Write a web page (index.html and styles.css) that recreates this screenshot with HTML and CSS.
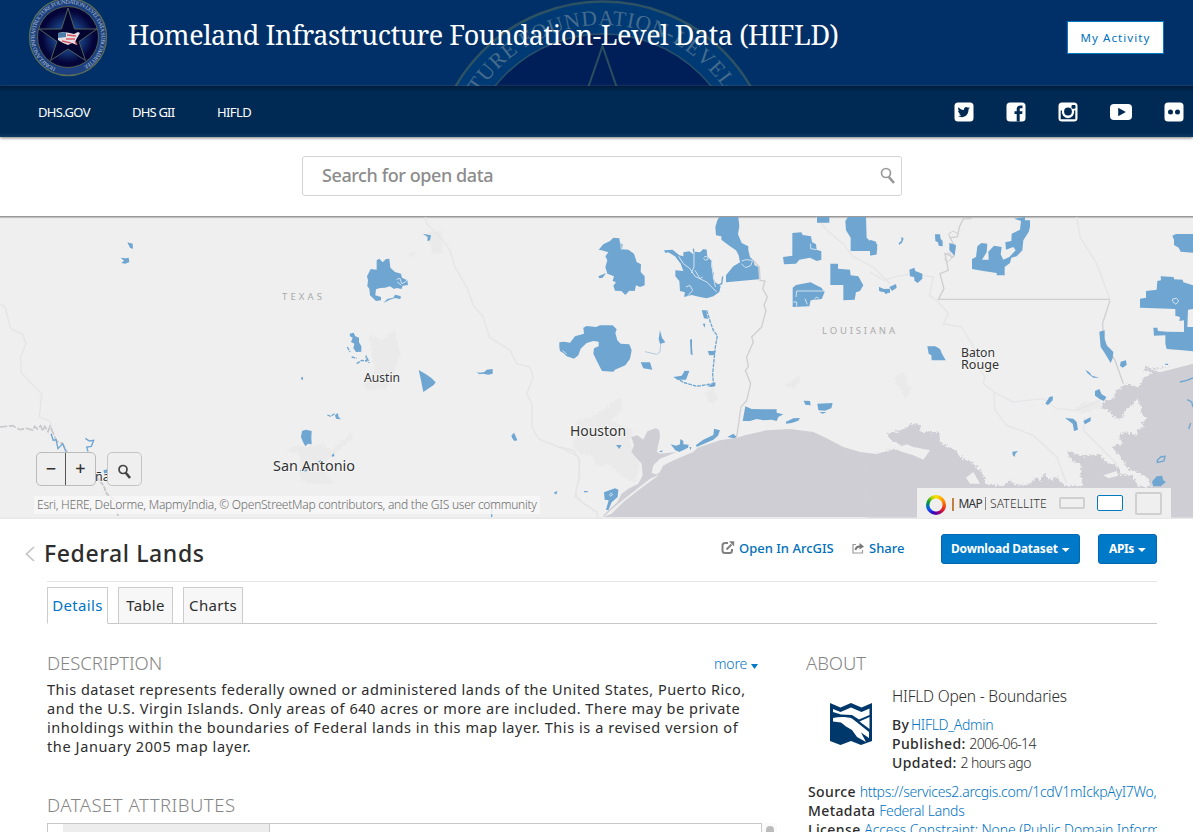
FILE: index.html
```html
<!DOCTYPE html>
<html lang="en">
<head>
<meta charset="utf-8">
<title>Federal Lands</title>
<link rel="stylesheet" href="styles.css">
</head>
<body>
<header class="banner">
  <svg class="watermark" width="320" height="86" viewBox="443 0 320 86">
    <defs><path id="bigArc" d="M456 172A147 147 0 0 1 750 172"/></defs>
    <circle cx="603" cy="172" r="170.5" fill="#003a74" stroke="#2d5264" stroke-width="2.5"/>
    <circle cx="603" cy="172" r="138" fill="#001f58" stroke="#28506a" stroke-width="1.5"/>
    <path d="M588 88L602.500 46L617 88" fill="none" stroke="#28505f" stroke-width="2"/>
    <text class="seal-text" font-size="21.500"><textPath href="#bigArc" startOffset="67" textLength="307">CTURE FOUNDATION-LEVEL</textPath></text>
  </svg>
  <svg class="seal" width="80" height="80" viewBox="0 0 80 80">
    <defs>
      <radialGradient id="glow"><stop offset="0" stop-color="#2a5fb0"/><stop offset=".5" stop-color="#143576"/><stop offset=".85" stop-color="#040438"/></radialGradient>
      <path id="ring" d="M27.700 70.900A33.300 33.300 0 1 1 52.300 70.900"/>
    </defs>
    <circle cx="40" cy="40" r="38.500" fill="#1c4080" stroke="#5d6f58" stroke-width="1.300"/>
    <circle cx="40" cy="40" r="30.500" fill="url(#glow)" stroke="#53604f"/>
    <path d="M40 11L46.500 32H69L51 44.500L57.500 63.500L40 52L22.500 63.500L29 44.500L11 32H33.500Z" fill="#03042f" stroke="#50605a"/>
    <text class="ring-text" font-size="5.800"><textPath href="#ring" textLength="180">HOMELAND INFRASTRUCTURE FOUNDATION-LEVEL DATA SUBCOMMITTEE</textPath></text>
    <path d="M30 36l6-1 6 1 4 1 4-2 2 1-3 5-2 4 2 3-5-2-4 2-5-2-5-3z" fill="#e8dfe4"/>
    <path d="M30 36l8-1v5l-8 1z" fill="#4c7fa8"/>
    <path d="M39 38l9 1M38 42l9 0M34 44l9 2M47 44l2 4" stroke="#d45a64" stroke-width="1.300"/>
  </svg>
  <h1 class="site-title">Homeland Infrastructure Foundation-Level Data (HIFLD)</h1>
  <a class="activity">My Activity</a>
</header>
<nav class="nav">
  <a class="n1">DHS.GOV</a><a class="n2">DHS GII</a><a class="n3">HIFLD</a>
  <div class="social">
    <svg width="20" height="20" viewBox="0 0 20 20"><rect x=".5" y=".5" width="19" height="19" rx="3.500" fill="#fff"/><path d="M16 6.200l-1.500.5 1.200-1.500-1.700.6c-2-1.700-4.500 0-4 2.300C7.500 8 5.800 6.800 4.500 5.300c-.8 1.500-.3 2.800.8 3.700l-1.200-.3c0 1.300.9 2.200 2.100 2.600l-1.100.1c.4 1 1.300 1.600 2.400 1.700-1 .8-2.300 1.100-3.600 1 4.800 2.800 10.600.2 10.600-6.500z" fill="#002a53"/></svg>
    <svg width="20" height="20" viewBox="0 0 20 20"><rect x=".5" y=".5" width="19" height="19" rx="3.500" fill="#fff"/><path d="M10.700 19.500V12H8.500V9.200h2.200V7.300c0-2.500 1.300-3.800 3.700-3.800h2.100v2.700h-1.400c-1.100 0-1.400.4-1.400 1.400v1.600h2.800L16.100 12h-2.400v7.500z" fill="#002a53"/></svg>
    <svg width="20" height="20" viewBox="0 0 20 20"><rect x=".5" y=".5" width="19" height="19" rx="3.500" fill="#fff"/><path d="M2.700 8.500v8.800h14.600V8.500H16a6.200 6.200 0 1 1-12 0z" fill="#002a53"/><circle cx="10" cy="9.500" r="5.500" fill="#fff"/><circle cx="10" cy="9.500" r="3.900" fill="#002a53"/><rect x="13.500" y="3" width="4" height="3.800" rx="1" fill="#002a53"/></svg>
    <svg class="yt" width="22" height="20" viewBox="0 0 22 20"><rect y="2" width="22" height="16" rx="4" fill="#fff"/><path d="M8.200 5.800L15.800 10L8.200 14.200z" fill="#002a53"/></svg>
    <svg width="20" height="20" viewBox="0 0 20 20"><rect x=".5" y=".5" width="19" height="19" rx="3.500" fill="#fff"/><circle cx="6.500" cy="10" r="2.500" fill="#002a53"/><circle cx="13.500" cy="10" r="2.500" fill="#002a53"/></svg>
  </div>
</nav>
<section class="search">
  <div class="search-box"><span>Search for open data</span>
    <svg width="16" height="18" viewBox="0 0 16 18" fill="none" stroke="#999"><circle cx="6" cy="6" r="4.500" stroke-width="1.700"/><path d="M8.800 9.800L14 16" stroke-width="2.600"/></svg>
  </div>
</section>
<section class="map">
  <svg class="map-art" width="1193" height="302" viewBox="0 217 1193 302">
    <defs><filter id="rough" x="-2%" y="-5%" width="104%" height="110%"><feTurbulence type="fractalNoise" baseFrequency=".16" numOctaves="2" seed="4"/><feDisplacementMap in="SourceGraphic" scale="18" xChannelSelector="R" yChannelSelector="G"/></filter></defs>
    <!-- western rivers -->
    <g transform="translate(0 217) scale(.33333)">
      <path class="river" d="M0 262L15 270L32 335L68 352L78 380L62 420L64 468L125 530L118 600L150 612L157 640"/>
      <path d="M0 630L38 626L60 638L80 634L98 640L104 628L112 636L122 626L128 642L134 628L144 644L150 628L160 650L170 672L188 680L202 706" fill="none" stroke="#c8c8cc" stroke-width="5" stroke-dasharray="22 5"/>
      <path d="M290 780L310 805L320 830L350 855L354 900" fill="none" stroke="#c4c4c8" stroke-width="5" stroke-dasharray="14 4"/>
      <g class="land">
        <path d="M382 76L398 80L399 96L390 92zM362 122L378 124L386 122L388 135L376 140L364 138L372 131zM310 760L325 756V775L314 774z"/>
        <path class="stream" d="M153 650L160 670L168 668L174 695L188 680L198 704M256 664L268 672L281 670L274 688L260 690L264 704"/>
      </g>
      <path class="city" d="M858 698L900 682L905 710L870 705z"/>
    </g>
    <!-- central Texas -->
    <g transform="translate(300 217) scale(.33333)">
      <path class="city" d="M385 45L425 40L430 110L395 112zM315 118L340 105L345 118zM205 350L245 370L285 335L300 410L280 470L260 515L200 520L190 500L225 460zM0 690L70 680L90 700L160 645L160 660L95 720L60 740L100 800L40 800L0 790zM815 680L900 600V720L840 710z"/>
      <path class="river" d="M376 0L380 20L430 70L450 100L465 150L500 210L520 265L550 300L568 360L630 400L650 440L690 450L700 480L680 530L696 560V630L715 665L800 700L835 720L840 780L825 830L850 860L890 885L895 906"/>
      <g class="land">
        <path d="M368 50L393 55L390 70L382 72L383 60zM230 130L238 125L248 136L258 126L268 125L271 152L285 165L303 170L306 182L322 190L324 204L308 206L305 216L290 213L282 216L270 208L255 212L240 213L228 217L226 235L243 240V250L228 252L210 235L208 215L202 208L204 190L201 178L212 156L230 158z"/>
        <path d="M250 258L262 246L280 242L285 233L298 236L304 240L300 246L285 243L270 248z"/>
        <path d="M149 350L161 347L166 358L177 362V376L184 388V404L168 405L160 393L163 380L153 375L158 362L150 358zM356 459L378 472L394 483L407 496L401 504L370 525L363 490zM530 465L540 467L553 465L560 458L578 456V470L565 473L548 470L538 472zM634 656L642 647L648 660L652 670L643 672L637 664zM6 642L18 638L35 642L34 662L35 682L24 680L16 688L9 675L3 660zM95 715L102 709L103 718L96 719zM105 595L113 588L116 600L123 607L108 605zM763 826L772 822L770 831L764 832zM0 760L22 756L22 762L2 766zM238 486L252 486V494L240 493zM4 480L9 480V488L4 488z"/>
        <path class="stream dotted" d="M142 390L150 405M155 420L170 424M170 440L185 430L200 432L198 416L208 438M82 594L92 598L104 590M570 850L575 872V900M55 735L65 730"/>
      </g>
      <path class="cut" d="M290 187L300 184L305 200L315 196L322 188M292 195L304 205"/>
    </g>
    <!-- east Texas and western Louisiana -->
    <g transform="translate(560 217) scale(.33333)">
      <path class="city" d="M50 610L100 600L180 540L188 580L150 610L220 640L210 680L240 740L225 800L190 780L140 740L110 750L90 700L50 700zM435 525L460 515L475 550L450 560zM675 505L715 475L722 495L700 515z"/>
      <path class="border-line" d="M580 130L598 150L600 190L615 192L608 215L622 240L612 265L618 280L605 330L575 360L580 375L560 420L565 450L556 460L572 500L560 550L543 570L530 660"/>
      <path class="river" d="M770 0L800 40L850 80L880 120L940 150L990 200M0 690L40 700L60 730L55 790L45 840L110 885"/>
      <path class="water" d="M130 900L165 868L200 840L240 812L298 775L275 768L280 745L300 725L350 705L300 710L290 704L300 660L298 640L288 633L262 643L250 668L232 655L214 660L222 685L214 705L245 740L248 775L235 800L205 815L185 830L172 855L130 895V900H995V700L950 711L900 705L850 690L800 664L760 645L690 636L620 640L560 653L530 662L480 670L410 693L340 730L310 745L300 765L250 800L200 840L160 875z"/>
      <path d="M130 900L200 840L270 785L300 772L245 812L190 855L155 890z" fill="#efefef"/>
      <path d="M278 762L300 742L350 715L415 690L400 705L340 730L305 748L290 765z" fill="#efefef"/>
      <g class="land">
        <path d="M116 98L130 82L150 72L160 62L178 64L180 78L188 82L186 97L205 98L222 110L230 135L243 142L242 165L254 178V205L240 210L228 205L224 222L208 221L196 234L184 222L165 221L160 206L168 196L158 192L162 178L142 170L136 150L142 130L136 118L145 106L125 100zM115 178L138 168L128 182L118 184z"/>
        <path d="M70 332L80 327L108 330L120 325L158 325L170 337L166 348L172 370L182 380L208 382L215 400L210 425L196 445L165 458L160 464L126 462L112 435L100 410L102 394L116 388V374L100 372L80 378L62 395L55 415L42 425L20 418L10 408L0 402L-2 390L-2 376L12 374L30 377L45 358L72 350z"/>
        <path d="M312 100L338 98L358 115L370 118V106L388 103L400 112L406 104L420 106L430 96L440 98L442 118L455 132L454 150L462 170L458 182L466 196L482 208L478 225L460 238L440 244L420 240L395 234L372 240L375 226L360 222L358 192L346 178V160L370 162L362 140L345 118L325 106L316 108z"/>
        <path d="M478 0L535 0L538 28L534 52L545 78L565 88V100L570 120L580 130L584 145L595 150L597 187L498 196L498 175L520 148L540 136L536 115L528 100L510 88L484 68V58L468 55L466 30L472 10z"/>
        <path d="M697 48L724 46L728 54L753 58L756 75L768 82L770 98L784 103V128L770 132L750 122L718 128L708 140L672 142L669 120L697 116zM771 0H808V17H771zM856 12L864 0H918L920 62L930 72L952 82L950 112L932 116L930 102H872V62L858 40zM811 140L834 140V155L870 158L872 175L895 178L910 205L900 222L888 226L884 248L850 250V204H811zM698 212L708 204L752 196L772 206L784 212L794 225L785 246L752 250L748 268L698 270zM957 210L972 216L990 215V228L972 225L958 222z"/>
        <path d="M548 612L556 568L575 576L630 577H650V587L670 592L655 600L650 612L635 608L610 610L590 606L570 612zM731 551L750 552L752 565L736 563zM772 560L818 558L814 574L795 581L775 580zM778 585L800 585L788 590zM678 614L700 604L720 603L715 611L695 618L678 620zM502 660L520 650L530 660L522 664zM408 684L430 668L460 654L462 635L480 640L474 656L460 668L410 690zM332 682L348 686L360 682L361 666L370 672V682L386 683L384 692L358 705L346 700zM425 280L438 280L444 306L432 304zM300 340L306 362L316 376L300 381L296 366zM242 436L270 436L277 458L250 454zM340 480L365 476L374 461L388 462L378 488L352 488zM443 402L466 402L464 414L448 415zM442 508L466 495V507L456 510zM390 368L396 366V390L398 415L392 412zM168 684L185 684L178 696zM132 826L165 814L175 818L173 840L155 856L145 880L138 878L146 850L134 848zM296 704L308 700L306 706zM428 320L436 320L434 332zM388 690L394 690L392 700z"/>
        <path class="stream dotted" d="M440 280L452 318L460 340L472 356L466 390L462 430L458 470L460 500L410 508L370 496L352 485M72 824H84"/>
        <path class="stream" d="M462 210L485 200L488 178M400 95L402 110"/>
        <path class="stream faint" d="M302 380L300 405L290 412L255 404"/>
      </g>
      <path class="cut" d="M356 118L370 140L390 155L405 178L440 195L470 225M402 106V150L394 168M378 210L390 205L398 220L384 236M432 120L440 118L445 126L436 130L430 124M455 135L458 165L466 210M708 240L710 222H794M735 245L742 262M762 248L770 240L776 244M545 132L558 128L578 130L572 146L556 152L544 140M752 80V95L770 98M182 75L184 98M405 160L420 185L428 180M150 828L158 832L152 838L148 832M700 255H710V268M8 400L20 412"/>
    </g>
    <!-- Louisiana, Mississippi and the delta -->
    <g transform="translate(870 217) scale(.33333)">
      <path class="city" d="M75 475L105 465L110 505L128 515L105 545L90 510L75 500zM610 580L640 555L690 550L695 570L640 590z"/>
      <path class="river" d="M620 0L630 60L680 140L720 247M0 165L40 190L80 178L130 170L190 180L178 235L200 250L235 290L220 320L275 330L310 390L325 450L345 480L340 500L372 525L430 555L520 545L560 575L620 580L690 550M372 525L375 580L410 625L490 655L560 720L590 800M645 600L640 640L690 690L740 740"/>
      <path class="border-line" d="M720 247H205L222 215L210 170L235 160L225 110L250 120L255 90L240 62L262 60L268 30L280 5H305M720 250L698 318L700 370L735 430L760 500"/>
      <path class="water coast" d="M-10 712L20 711L60 700L100 689L60 665L50 648L90 642L125 620L150 625L152 645L208 645L210 678L250 695L270 720L310 738L345 780L345 800L400 808L420 790L440 805L480 800L500 780L512 795L520 768L540 790L560 780L585 808L640 808L630 770L635 745L600 725L590 700L640 718L690 712L705 735L740 745L750 770L790 778L805 810L845 808L830 780L775 755L755 725L725 688L760 680L745 655L765 645L800 655L805 635L825 630L815 620L830 605L812 590L815 570L800 545L790 560L770 575L755 605L730 600L715 580L692 575L700 555L730 545L740 520L770 502L805 510L820 482L850 465L820 460L830 450L850 456L880 452L985 437V910H-10z"/>
      <path d="M72 695L110 682L130 690L180 700L160 728L130 715L100 706zM288 782L310 765L330 800H300zM700 775L740 762L745 776L715 784zM850 460L969 433V440L870 466z" fill="#efefef"/>
      <g class="land">
        <path d="M0 68L18 74L22 98L8 102L20 112L0 115zM94 60L101 64L97 76L88 84L86 78L94 72zM195 52L210 52L212 66L218 72V88L206 86L204 76L196 72zM238 78L258 84L254 116L238 100zM118 158L133 152L136 162L157 170V185L143 198L134 192L132 180L120 178zM27 210L44 220L57 218V225L48 232L42 225L28 222zM58 210L78 201L80 212L66 222z"/>
        <path d="M432 5L465 0V10L480 10V30L476 45L460 70L457 100L440 118L424 122L420 138L404 150V175L380 175V168L340 162L306 156V126L318 120L322 88L334 78L352 80L350 106L336 128L356 128L355 104L372 86L395 90L392 112L400 128L418 120L437 100L430 90L408 98L406 76L424 72L425 50L450 38L453 12zM172 388L196 388L210 396L216 410L227 430H185L184 415L176 410zM688 344L704 340V365L710 385L730 405L728 424L722 438L704 408L692 390zM752 434L768 430L770 444L758 452L750 446zM646 458L658 466L666 476L688 482L670 482L652 468zM675 522L688 516L695 532L709 540L702 552L690 547L675 536zM538 540L549 538L548 550L534 564L526 560zM585 603L610 605L620 615L624 638L612 642L608 620zM640 612L662 600V612L645 622zM427 704L444 702L436 710L434 720L428 714zM846 794L860 778L876 776L880 790L888 795L872 808L850 808z"/>
        <path d="M907 56L918 51H969V107L932 104L926 92L912 84V68zM810 245L828 242V222L860 218L862 192L873 190L872 178L911 180L912 187L938 188L940 196L969 205V276L954 278L952 330H969V403L938 400L890 396L886 380V355L852 356L850 332L862 332L864 342L892 344L942 345V310L928 312L930 300L916 296V276L810 272z"/>
        <path class="stream" d="M930 495L950 490L969 483M952 548L965 555L969 570M956 636L962 618M862 730L872 720L885 718L882 732L862 736zM886 442H894"/>
      </g>
      <path class="cut" d="M908 246L920 244L926 252L918 262L908 254z"/>
      <path d="M240 62L236 50L250 42L262 50M228 110L240 108L245 125L232 135L222 125" fill="none" stroke="#d0d0d4" stroke-width="3"/>
    </g>
    <path d="M0 517.500H1193V519H0z" fill="#e8e8e8"/>
    <g class="labels">
      <text class="state" x="282" y="300" textLength="40">TEXAS</text>
      <text class="state" x="822" y="334" textLength="73">LOUISIANA</text>
      <text x="364" y="382" textLength="36" lengthAdjust="spacingAndGlyphs">Austin</text>
      <text class="big" x="273" y="471" textLength="82" lengthAdjust="spacingAndGlyphs">San Antonio</text>
      <text class="big" x="570" y="436" textLength="56" lengthAdjust="spacingAndGlyphs">Houston</text>
      <text x="961" y="357" textLength="34" lengthAdjust="spacingAndGlyphs">Baton</text>
      <text x="961" y="369" textLength="38" lengthAdjust="spacingAndGlyphs">Rouge</text>
      <text x="95" y="481">ña</text>
    </g>
  </svg>
  <div class="zoom"><span class="zb">−</span><span class="zb plus">+</span></div>
  <div class="find"><svg width="16" height="18" viewBox="0 0 16 18" fill="none" stroke="#444"><circle cx="6" cy="6.500" r="4" stroke-width="1.700"/><path d="M8.500 9.500L13 15" stroke-width="2.600"/></svg></div>
  <div class="credit"><span>Esri, HERE, DeLorme, MapmyIndia, © OpenStreetMap contributors, and the GIS user community</span></div>
  <div class="basemap">
    <div class="wheel"></div><i class="bar"></i><span class="on">MAP</span><i class="bar thin"></i><span class="sat">SATELLITE</span>
    <b class="size s1"></b><b class="size s2"></b><b class="size s3"></b>
  </div>
</section>
<main class="page">
  <div class="head">
    <svg class="back" width="10" height="16" viewBox="0 0 10 16"><path d="M9 1L1.500 8L9 15" fill="none" stroke="#c4c4c4" stroke-width="1.700"/></svg>
    <h2>Federal Lands</h2>
    <div class="actions">
      <a class="open"><svg width="14" height="14" viewBox="0 0 14 14" fill="none" stroke="#808080" stroke-width="2"><path d="M7 2H4Q1.500 2 1.500 4.500V9.500Q1.500 12 4 12H8.500Q11 12 11 9.500V8"/><path d="M5.500 8.500L10.500 3.500"/><path d="M8 .3H13.200V5.500z" fill="#808080" stroke="none"/></svg><span>Open In ArcGIS</span></a>
      <a class="share"><svg width="13" height="12" viewBox="0 0 13 12" fill="none" stroke="#999" stroke-width="1.200"><path d="M4 2.500H1V11H10.500V8"/><path d="M3.500 8Q4 4.500 8 4.500" stroke-width="2" stroke="#777"/><path d="M7.500 1L12 4.500L7.500 7.500z" fill="#777" stroke="none"/></svg><span>Share</span></a>
      <a class="btn dl"><span>Download Dataset</span><i></i></a>
      <a class="btn api"><span>APIs</span><i></i></a>
    </div>
  </div>
  <div class="tabs"><a class="tab t1 active">Details</a><a class="tab t2">Table</a><a class="tab t3">Charts</a></div>
  <div class="cols">
    <article class="desc">
      <div class="desc-head"><h3 class="h-desc">DESCRIPTION</h3><a class="more"><span>more</span><i></i></a></div>
      <p><span class="l1">This dataset represents federally owned or administered lands of the United States, Puerto Rico,</span><br><span class="l2">and the U.S. Virgin Islands. Only areas of 640 acres or more are included. There may be private</span><br><span class="l3">inholdings within the boundaries of Federal lands in this map layer. This is a revised version of</span><br><span class="l4">the January 2005 map layer.</span></p>
      <h3 class="attrs">DATASET ATTRIBUTES</h3>
      <div class="table"><div class="grid"><div class="cell"></div></div><div class="scroll"><i></i></div></div>
    </article>
    <aside class="about">
      <h3 class="h-about">ABOUT</h3>
      <div class="owner">
        <svg width="42" height="42" viewBox="0 0 42 42"><path d="M0 0L10.500 4.500L21 0L31.500 4.500L42 0V38L31 42L21 38L10.500 42L0 38z" fill="#00386b"/><path d="M3 6L10.500 9L21 4.500L31.500 9L39.500 5.500V12L29 16.500L22 12L11 11.500L3 9z" fill="#fff"/><path d="M3 15C10 13.500 18 14 22 15.500L29 21L39 29V35L31 29.500L36 39L27 34L22 27L16 23.500L11 19.500L3 18.500z" fill="#fff"/><path d="M29.500 18.500L39.500 14V26z" fill="#fff"/></svg>
        <div class="facts">
          <div class="name">HIFLD Open - Boundaries</div>
          <div><b class="k-by">By</b> <a class="v-by">HIFLD_Admin</a></div>
          <div><b class="k-pub">Published:</b> <span class="v-pub">2006-06-14</span></div>
          <div><b class="k-upd">Updated:</b> <span class="v-upd">2 hours ago</span></div>
        </div>
      </div>
      <div class="links">
        <div><b class="k-src">Source</b> <a class="v-src">https://services2.arcgis.com/1cdV1mIckpAyI7Wo,</a></div>
        <div><b class="k-met">Metadata</b> <a class="v-met">Federal Lands</a></div>
        <div><b class="k-lic">License</b> <a class="v-lic">Access Constraint: None (Public Domain Information)</a></div>
      </div>
    </aside>
  </div>
</main>
</body>
</html>
```
FILE: styles.css
```css
* { box-sizing: border-box; }
body { margin: 0; width: 1193px; height: 832px; overflow: hidden; background: #fff; color: #2d2d2d; font-family: "Noto Sans", sans-serif; font-size: 15px; }
h1, h2, h3, p { margin: 0; font-weight: 400; }
a, span { white-space: nowrap; }
i { font-style: normal; }
svg { flex: none; display: block; }

.banner { position: relative; display: flex; height: 86px; background: #003067; overflow: hidden; }
.watermark { position: absolute; left: 443px; top: 0; }
.seal-text { fill: #456b8d; font-family: "Liberation Serif", serif; }
.ring-text { fill: #b4c1d3; font-family: "Liberation Serif", serif; }
.seal { margin: -3px 0 0 28px; }
.site-title { position: relative; margin: 17px 0 0 20px; color: #fff; font: 400 27px/36px "Noto Serif", "DejaVu Serif Condensed", "DejaVu Serif", serif; white-space: nowrap; width: 711px; letter-spacing: -.44px; }
.activity { margin: 21px 29px 0 auto; width: 97px; height: 33px; border: 1px solid #0079c1; background: #fff; color: #0072bc; font-size: 11.500px; letter-spacing: 1.100px; line-height: 31px; text-align: center; }

.nav { position: relative; display: flex; align-items: center; height: 51px; padding: 1px 9px 0 38px; background: linear-gradient(#001c3e, #002a53 6px, #002a53 47px, #0f3a63); color: #fff; font-size: 13px; box-shadow: 0 1px 3px #777; }
.n1 { width: 94px; letter-spacing: -.65px; }
.n2 { width: 85px; letter-spacing: -.8px; }
.n3 { letter-spacing: -.6px; }
.social { display: flex; margin-left: auto; gap: 32px; }

.search { height: 80px; padding: 19px 0 0 302px; border-bottom: 1px solid #999; }
.search-box { display: flex; align-items: center; justify-content: space-between; width: 600px; height: 40px; padding: 0 5px 0 19px; border: 1px solid #d4d4d4; border-radius: 3px; color: #8c8c8c; font: 500 18px/24px "Noto Sans"; letter-spacing: -.42px; }
.search-box span { padding-bottom: 2px; }

.map { position: relative; height: 302px; background: #efefef; overflow: hidden; box-shadow: inset 0 2px 1px -1px #bbb; }
.map-art { display: block; }
.land path { fill: #6fa6d1; }
.land .stream { fill: none; stroke: #6fa6d1; stroke-width: 4; }
.land .dotted { stroke-dasharray: 11 3; }
.land .faint { stroke: #b4cbdd; stroke-width: 3; }
.water { fill: #cfced4; }
.coast { filter: url(#rough); }
.city { fill: #eaeaea; filter: url(#rough); }
.river { fill: none; stroke: #e5e5e8; stroke-width: 4; }
.border-line { fill: none; stroke: #cfcfd2; stroke-width: 4; }
.cut { fill: none; stroke: #d3e2ee; stroke-width: 3; }
.labels { fill: #333; font: 12.500px "Noto Sans", sans-serif; paint-order: stroke; stroke: #f4f4f4; stroke-width: 2px; }
.labels .big { font-size: 14.500px; }
.labels .state { font-size: 9.500px; fill: #aaa; stroke: none; }
.zoom { position: absolute; left: 36px; top: 235px; display: flex; width: 60px; height: 34px; border: 1px solid #bbb; border-radius: 5px; background: #efefef; }
.zb { width: 28px; color: #333; font-size: 18px; font-weight: 500; line-height: 30px; text-align: center; }
.plus { width: 30px; border-left: 1px solid #555; }
.find { position: absolute; left: 107px; top: 235px; display: flex; width: 35px; height: 34px; padding: 10px 0 0 9px; border: 1px solid #c5c5c5; border-radius: 5px; background: #efefef; }
.credit { position: absolute; left: 34px; top: 279px; width: 506px; height: 18px; padding-left: 3px; background: rgba(248,248,248,.8); color: #6c6c6c; font: 300 12px/17px "Noto Sans"; letter-spacing: -.25px; }
.basemap { position: absolute; left: 917px; top: 271px; display: flex; align-items: center; width: 254px; height: 30px; padding-left: 9px; background: #efefef; color: #333; font-size: 12px; }
.wheel { margin-top: 4px; width: 20px; height: 20px; border-radius: 50%; background: radial-gradient(circle, #efefef 6px, transparent 7px), conic-gradient(#ffe000, #ff8c00 60deg, #e8251f 120deg, #80008a 165deg, #3700b5 195deg, #0f54ff 240deg, #00983b 290deg, #aed500 330deg, #ffe000); }
.bar { margin: 3px 5px 0 6px; width: 1.500px; height: 13px; background: #c08040; }
.bar.thin { margin: 0 4px 0 3px; width: 1px; background: #888; }
.on { letter-spacing: -.8px; }
.sat { letter-spacing: .2px; font-weight: 300; }
.size { border: 2px solid #d0d0d0; border-radius: 2px; }
.s1 { margin-left: 12px; width: 26px; height: 12px; }
.s2 { margin-left: 12px; width: 26px; height: 16px; background: #fff; border: 1px solid #0079c1; }
.s3 { margin-left: 12px; width: 27px; height: 23px; }

.head { position: relative; display: flex; height: 62px; margin-left: 24px; width: 1133px; }
.head::after { content: ""; position: absolute; left: 23px; right: 0; bottom: -1px; height: 1px; background: #e6e6e6; }
.back { margin: 27px 9px 0 1px; }
.head h2 { margin-top: 17px; font: 500 23px/34px "Noto Sans"; letter-spacing: .6px; white-space: nowrap; }
.actions { display: flex; margin-left: auto; padding-top: 15px; line-height: 29px; font-size: 13px; font-weight: 500; color: #0070b8; }
.actions a { display: flex; }
.open { width: 131px; }
.open svg { margin: 7px 4px 0 0; }
.share { width: 89px; }
.share svg { margin: 8px 4px 0 0; }
.actions .btn { align-items: center; height: 30px; border: 1px solid #0068b0; border-radius: 3px; background: #0079c8; color: #fff; font-size: 12px; font-weight: 700; line-height: 26px; }
.btn span { padding-bottom: 1px; }
.btn i { width: 8px; height: 4px; margin: 2px 0 0 4px; background: #fff; clip-path: polygon(0 0, 100% 0, 50% 100%); }
.dl { width: 139px; padding-left: 9px; margin-right: 18px; letter-spacing: -.2px; }
.api { width: 59px; padding-left: 10px; letter-spacing: -.4px; }

.tabs { display: flex; gap: 10px; margin: 6px 36px 0 47px; height: 37px; border-bottom: 1px solid #c8c8c8; }
.tab { height: 37px; border: 1px solid #ccc; background: #f7f7f7; line-height: 35px; text-align: center; font-size: 15px; letter-spacing: .3px; }
.t1 { width: 61px; background: #fff; color: #0073c2; border-bottom-color: #fff; }
.t2 { width: 55px; }
.t3 { width: 60px; }

.cols { display: flex; padding: 27px 36px 0 47px; }
.desc { width: 730px; margin-right: 29px; }
.desc-head { display: flex; justify-content: space-between; width: 711px; }
h3 { color: #858585; font: 300 18.500px/24px "Noto Sans"; letter-spacing: -.08px; }
.more { display: flex; color: #0073c2; font: 300 14px/26px "Noto Sans"; letter-spacing: -.2px; }
.more i { width: 7px; height: 5px; margin: 13px 0 0 4px; background: #0079c8; clip-path: polygon(0 0, 100% 0, 50% 100%); }
.desc p { margin-top: 3px; font-size: 14.500px; line-height: 19px; }
.l1 { letter-spacing: .48px; }
.l2 { letter-spacing: .54px; }
.l3 { letter-spacing: .56px; }
.l4 { letter-spacing: .61px; }
.attrs { margin-top: 37px; letter-spacing: .5px; }
.table { display: flex; margin-top: 6px; height: 20px; }
.grid { width: 715px; border: 1px solid #c8c8c8; padding-left: 15px; }
.cell { width: 207px; height: 20px; background: #ededed; border-right: 1px solid #c8c8c8; }
.scroll { width: 15px; padding: 3px 0 0 4px; background: #fafafa; }
.scroll i { display: block; width: 8px; height: 20px; border-radius: 4px; background: #bbb; }
.about { width: 351px; overflow: hidden; }
.owner { display: flex; padding: 12px 0 0 24px; }
.owner svg { margin: 16px 20px 0 0; }
.facts, .links { line-height: 19px; font-size: 14px; font-weight: 300; }
.facts b, .links b { font-weight: 500; letter-spacing: .4px; }
.facts a, .links a { color: #0073c2; }
.k-by { margin-right: -2px; }
.v-by { letter-spacing: -.3px; }
.v-pub { letter-spacing: -.65px; }
.v-upd { letter-spacing: -.55px; }
.name { font-size: 15.500px; margin-bottom: 9px; letter-spacing: -.2px; white-space: nowrap; }
.links { margin-top: 10px; padding-left: 2px; white-space: nowrap; }
.v-src { letter-spacing: -.3px; }
.v-met { letter-spacing: -.25px; }
.v-lic { letter-spacing: -.1px; }
```
